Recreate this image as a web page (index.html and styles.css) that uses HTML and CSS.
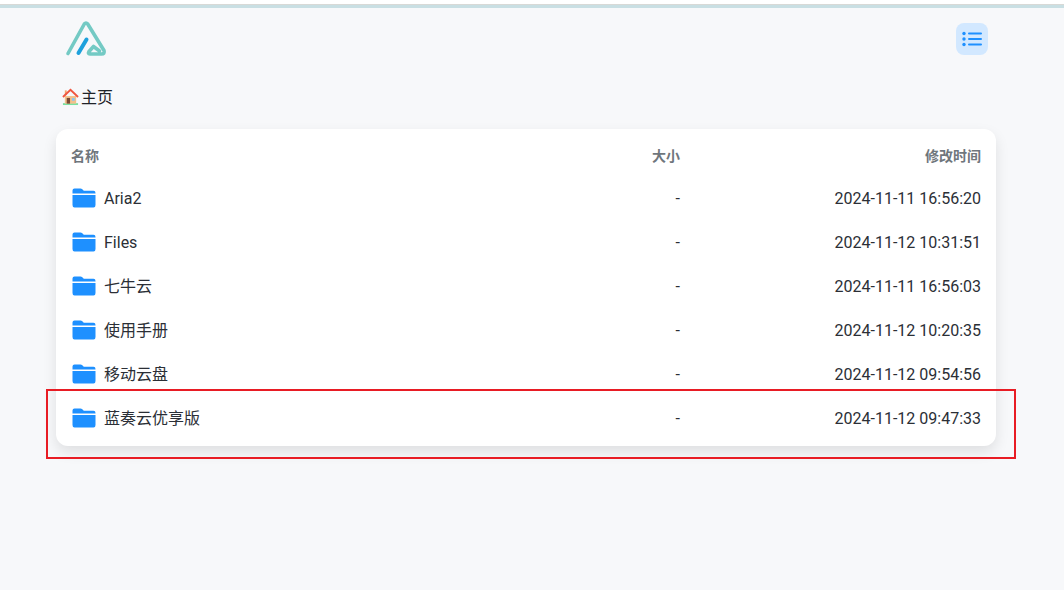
FILE: index.html
```html
<!DOCTYPE html>
<html>
<head>
    <title>主页</title>
    <link rel="stylesheet" href="styles.css">
</head>
<body>
    <div class="top-line"></div>

    <div class="page">
        <header class="header">
            <svg class="logo" viewBox="0 0 44 40" width="44" height="40">
                <path d="M4 34.500 L20.300 5 Q22 3 23.700 5 L40 31.500 Q41 35 37.500 35 L26 35 Q23.500 35 25 32.500 L29.500 27.500 L35.500 32" fill="none" stroke="#74cac4" stroke-width="3.600" stroke-linecap="round" stroke-linejoin="round"/>
                <path d="M14.500 34 L22.500 20.500" fill="none" stroke="#1ea1dc" stroke-width="4" stroke-linecap="round"/>
            </svg>
            <button class="menu-btn">
                <svg viewBox="0 0 20 16" width="20" height="16">
                    <circle cx="2" cy="2.500" r="1.700" fill="#1e90ff"/>
                    <circle cx="2" cy="8" r="1.700" fill="#1e90ff"/>
                    <circle cx="2" cy="13.500" r="1.700" fill="#1e90ff"/>
                    <path d="M7 2.500H19M7 8H19M7 13.500H19" stroke="#1e90ff" stroke-width="2" stroke-linecap="round"/>
                </svg>
            </button>
        </header>

        <nav class="crumb">
            <svg class="house" viewBox="0 0 18 18" width="18" height="18">
                <rect x="1" y="15.500" width="16" height="2" fill="#7be0a0"/>
                <rect x="3" y="8" width="12" height="8" fill="#f3c08a"/>
                <rect x="3" y="2" width="2" height="5" fill="#f3a56c"/>
                <path d="M1 9 L9 1.500 L17 9" fill="none" stroke="#f0553f" stroke-width="2"/>
                <rect x="5" y="10" width="3.500" height="6" fill="#7a4a35"/>
                <rect x="10.500" y="10" width="3" height="3" fill="#8fc4ea"/>
            </svg>
            <span class="cjk">主页</span>
        </nav>

        <div class="card">
            <div class="row head">
                <div>名称</div>
                <div class="size">大小</div>
                <div class="time">修改时间</div>
            </div>
            <div class="row">
                <div class="name"><svg class="folder" viewBox="0 0 24 20" width="24" height="20"><use href="#folder"/></svg>Aria2</div>
                <div class="size">-</div>
                <div class="time">2024-11-11 16:56:20</div>
            </div>
            <div class="row">
                <div class="name"><svg class="folder" viewBox="0 0 24 20" width="24" height="20"><use href="#folder"/></svg>Files</div>
                <div class="size">-</div>
                <div class="time">2024-11-12 10:31:51</div>
            </div>
            <div class="row">
                <div class="name"><svg class="folder" viewBox="0 0 24 20" width="24" height="20"><use href="#folder"/></svg><span class="cjk">七牛云</span></div>
                <div class="size">-</div>
                <div class="time">2024-11-11 16:56:03</div>
            </div>
            <div class="row">
                <div class="name"><svg class="folder" viewBox="0 0 24 20" width="24" height="20"><use href="#folder"/></svg><span class="cjk">使用手册</span></div>
                <div class="size">-</div>
                <div class="time">2024-11-12 10:20:35</div>
            </div>
            <div class="row">
                <div class="name"><svg class="folder" viewBox="0 0 24 20" width="24" height="20"><use href="#folder"/></svg><span class="cjk">移动云盘</span></div>
                <div class="size">-</div>
                <div class="time">2024-11-12 09:54:56</div>
            </div>
            <div class="row">
                <div class="name"><svg class="folder" viewBox="0 0 24 20" width="24" height="20"><use href="#folder"/></svg><span class="cjk">蓝奏云优享版</span></div>
                <div class="size">-</div>
                <div class="time">2024-11-12 09:47:33</div>
            </div>
        </div>
    </div>

    <div class="mark"></div>

    <svg class="defs" width="0" height="0">
        <symbol id="folder" viewBox="0 0 24 20">
            <path d="M2.500 0.500H8.500Q9.500 0.500 10.300 1.300L11.800 2.700H21.500Q23.500 2.700 23.500 5V5.600H0.500V2.500Q0.500 0.500 2.500 0.500Z" fill="#1e90ff"/>
            <path d="M0.500 7H23.500V17Q23.500 19.500 21.500 19.500H2.500Q0.500 19.500 0.500 17Z" fill="#1e90ff"/>
        </symbol>
    </svg>
</body>
</html>
```

FILE: styles.css
```css
body {
    font-family: Roboto, "Noto Sans CJK SC", sans-serif;
    background-color: #f7f8fa;
    color: #333;
    margin: 0;
    height: 590px;
    overflow: hidden;
}

.top-line {
    height: 4px;
    background-color: #c9dfe3;
    border-top: 4px solid #fff;
    box-shadow: inset 0 1px 0 #d8d9d6;
}

.page {
    width: 940px;
    margin-left: 56px;
}

.header {
    display: flex;
    justify-content: space-between;
    align-items: center;
    height: 62px;
    padding: 0 8px;
}

.crumb {
    display: flex;
    align-items: center;
    gap: 2px;
    height: 24px;
    margin: 15px 0 20px 6px;
    font-size: 16px;
    color: #1f2328;
}

.house {
    width: 17px;
}

.cjk {
    margin-top: -2px;
}

.menu-btn {
    display: flex;
    align-items: center;
    justify-content: center;
    width: 32px;
    height: 32px;
    padding: 0;
    border: none;
    border-radius: 8px;
    background-color: #d2e8ff;
}

.card {
    padding: 6px 0;
    background-color: #fff;
    border-radius: 12px;
    box-shadow: 0 6px 14px rgba(0, 0, 0, 0.1);
}

.row {
    display: grid;
    grid-template-columns: 1fr 160px 301px;
    align-items: center;
    height: 44px;
    padding: 0 15px;
    font-size: 16px;
    color: #2b2f36;
}

.row.head {
    height: 39px;
    padding-bottom: 2px;
    font-size: 14px;
    font-weight: bold;
    color: #6f767c;
}

.name {
    display: flex;
    align-items: center;
    gap: 8px;
    padding-left: 1px;
}

.size,
.time {
    text-align: right;
}

.defs {
    position: absolute;
}

.mark {
    position: absolute;
    left: 46px;
    top: 389px;
    width: 966px;
    height: 66px;
    border: 2px solid #e81c24;
}
```
